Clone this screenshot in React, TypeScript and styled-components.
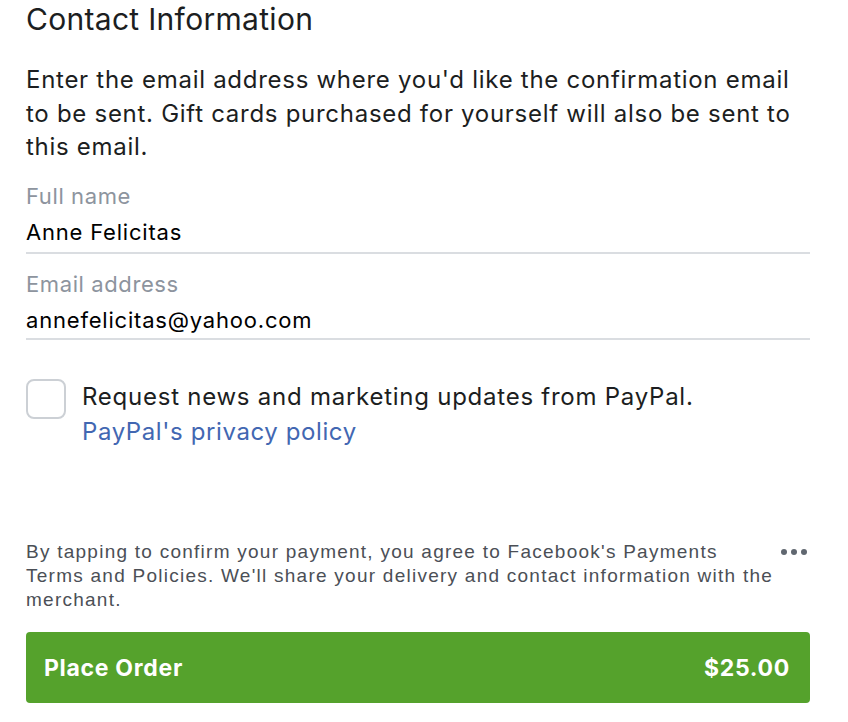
import React from "react";
import styled, { createGlobalStyle } from "styled-components";

const Global = createGlobalStyle`
  html, body { margin: 0; padding: 0; background: #ffffff; }
  body { font-family: Inter, "Noto Sans", sans-serif; color: #1c1e21; -webkit-font-smoothing: antialiased; }
  * { box-sizing: border-box; }
`;

const Page = styled.div`
  width: 848px;
  height: 722px;
  padding: 0 38px 0 26px;
  display: flex;
  flex-direction: column;
  overflow: hidden;
`;

const Title = styled.h1`
  margin: 0;
  padding-top: 1px;
  font-size: 30px;
  font-weight: 400;
  line-height: 36px;
  letter-spacing: 0.3px;
  color: #1c1e21;
`;

const Intro = styled.p`
  margin: 26px 0 0;
  font-size: 24px;
  line-height: 33.5px;
  letter-spacing: 0.72px;
  color: #1c1e21;
`;

const Field = styled.div<{ $first?: boolean }>`
  display: flex;
  flex-direction: column;
  border-bottom: 2px solid #dadde1;
  margin-top: ${(p) => (p.$first ? "17px" : "15px")};
  padding-bottom: ${(p) => (p.$first ? "3px" : "1px")};
`;

const Label = styled.span`
  font-size: 22px;
  line-height: 30px;
  letter-spacing: 0.6px;
  color: #8d949e;
`;

const Value = styled.span`
  font-size: 22px;
  line-height: 34px;
  letter-spacing: 0.8px;
  color: #000000;
  margin-top: 4px;
`;

const OptIn = styled.label`
  display: flex;
  align-items: flex-start;
  gap: 16px;
  margin-top: 39px;
`;

const Box = styled.span`
  flex: 0 0 auto;
  width: 40px;
  height: 40px;
  border: 2px solid #ccd0d5;
  border-radius: 8px;
  background: #fff;
`;

const OptText = styled.div`
  display: flex;
  flex-direction: column;
  font-size: 24px;
  line-height: 35px;
  letter-spacing: 0.75px;
  color: #1c1e21;
`;

const Link = styled.a`
  color: #4267b2;
  text-decoration: none;
  letter-spacing: 0.6px;
`;

const Spacer = styled.div`
  flex: 1;
`;

const Legal = styled.div`
  display: flex;
  align-items: flex-start;
  justify-content: space-between;
  gap: 4px;
`;

const LegalText = styled.p`
  margin: 0;
  max-width: 756px;
  font-family: "Liberation Sans", Arial, sans-serif;
  font-size: 19px;
  line-height: 24px;
  letter-spacing: 1.25px;
  color: #4b4f56;
`;

const More = styled.span`
  display: flex;
  gap: 4px;
  margin-top: 9px;
  margin-right: 3px;
`;

const Dot = styled.span`
  width: 6px;
  height: 6px;
  border-radius: 50%;
  background: #606770;
`;

const OrderButton = styled.button`
  margin: 20px 0 19px;
  height: 71px;
  width: 100%;
  border: none;
  border-radius: 4px;
  background: #55a22c;
  color: #ffffff;
  display: flex;
  align-items: center;
  justify-content: space-between;
  padding: 0 20px 0 18px;
  font-family: Inter, "Noto Sans", sans-serif;
  font-size: 23px;
  font-weight: 700;
  letter-spacing: 0.7px;
  cursor: pointer;
`;

export default function App() {
  return (
    <>
      <Global />
      <Page>
        <Title>Contact Information</Title>
        <Intro>
          Enter the email address where you'd like the confirmation email to be sent. Gift cards
          purchased for yourself will also be sent to this email.
        </Intro>
        <Field $first>
          <Label>Full name</Label>
          <Value>Anne Felicitas</Value>
        </Field>
        <Field>
          <Label>Email address</Label>
          <Value>annefelicitas@yahoo.com</Value>
        </Field>
        <OptIn>
          <Box />
          <OptText>
            <span>Request news and marketing updates from PayPal.</span>
            <Link href="#">PayPal's privacy policy</Link>
          </OptText>
        </OptIn>
        <Spacer />
        <Legal>
          <LegalText>
            By tapping to confirm your payment, you agree to Facebook's Payments
            <br />
            Terms and Policies. We'll share your delivery and contact information with the
            <br />
            merchant.
          </LegalText>
          <More>
            <Dot />
            <Dot />
            <Dot />
          </More>
        </Legal>
        <OrderButton>
          <span>Place Order</span>
          <span>$25.00</span>
        </OrderButton>
      </Page>
    </>
  );
}
